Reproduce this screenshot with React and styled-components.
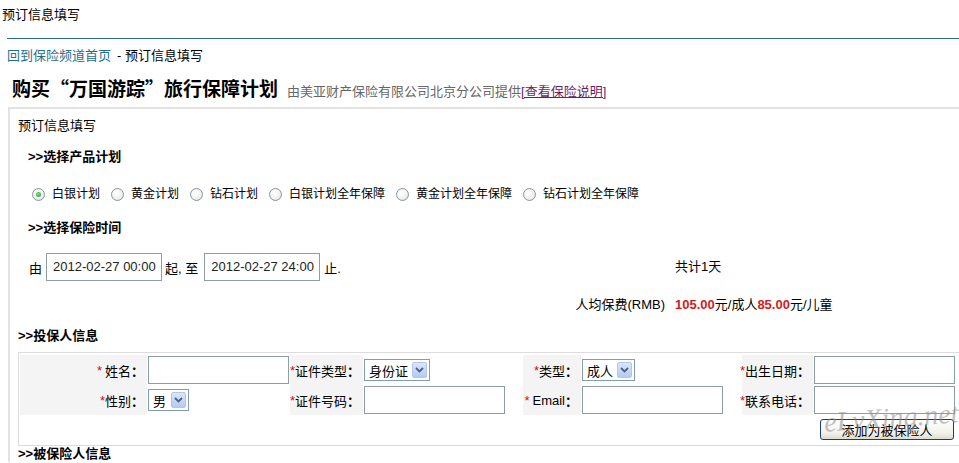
import styled, { createGlobalStyle } from 'styled-components'

const GlobalStyle = createGlobalStyle`
  html, body {
    margin: 0;
    padding: 0;
    background: #fff;
    overflow: hidden;
  }
  body {
    font-family: "Liberation Sans", Arial, "Noto Sans CJK SC", sans-serif;
    font-size: 13px;
    color: #000;
  }
`

const Page = styled.div`
  position: relative;
  width: 985px;
  height: 463px;
  overflow: hidden;
`

const TopTitle = styled.div`
  padding: 6px 2px 0;
  line-height: 18px;
`

const Rule = styled.div`
  margin: 14px 0 0 7px;
  height: 1px;
  background: #2d7090;
`

const Breadcrumb = styled.div`
  margin-top: 8px;
  padding-left: 7px;
  line-height: 18px;
`

const CrumbLink = styled.a`
  color: #1f6f8b;
  text-decoration: none;
  margin-right: 6px;
`

const TitleRow = styled.div`
  margin-top: 11px;
  padding-left: 12px;
  height: 24px;
  line-height: 24px;
  display: flex;
  align-items: baseline;
  overflow: visible;
`

const Title = styled.h1`
  margin: 0 9px 0 0;
  font-family: "Noto Sans CJK SC", sans-serif;
  font-size: 19px;
  line-height: 24px;
  font-weight: 700;
`

const Provider = styled.span`
  color: #666;
  font-size: 13px;
`

const InfoLink = styled.a`
  color: #6b1f6b;
  text-decoration: underline;
`

const Box = styled.div`
  margin: 7px 0 0 8px;
  border-top: 2px solid #e2e2e2;
  border-left: 2px solid #e2e2e2;
  padding: 8px 0 0 8px;
`

const BoxCaption = styled.div`
  line-height: 18px;
`

const SectionHead = styled.div`
  margin: ${({ $top }) => $top}px 0 0 ${({ $indent }) => $indent}px;
  line-height: ${({ $lh }) => $lh || 18}px;
  font-weight: 700;
`

const RadioRow = styled.div`
  margin: 19px 0 0 14px;
  display: flex;
  align-items: center;
  gap: 11px;
  line-height: 18px;
`

const RadioItem = styled.label`
  display: flex;
  align-items: center;
  font-size: 12px;
`

const RadioDot = styled.span`
  width: 11px;
  height: 11px;
  margin-right: 7px;
  border-radius: 50%;
  border: 1px solid #8a96a3;
  background: radial-gradient(circle at 40% 40%, #ffffff 0%, #f0f0ec 55%, #d6d8d3 100%);
  display: flex;
  align-items: center;
  justify-content: center;

  &::after {
    content: '';
    width: 5px;
    height: 5px;
    border-radius: 50%;
    background: radial-gradient(circle at 40% 40%, #7ee07e, #1f9a2a);
    display: ${({ $checked }) => ($checked ? 'block' : 'none')};
  }
`

const DateGrid = styled.div`
  margin: 16px 0 0 10px;
  display: grid;
  grid-template-columns: 637px 1fr;
  column-gap: 10px;
  row-gap: 15px;
  align-items: center;
`

const DateLine = styled.div`
  display: flex;
  align-items: center;
  height: 28px;
`

const Gap = styled.span`
  margin: 0 ${({ $r }) => $r}px 0 ${({ $l }) => $l}px;
`

const DateInput = styled.div`
  box-sizing: border-box;
  width: 116px;
  height: 28px;
  border: 1px solid #8d9cab;
  padding: 5px 0 0 6px;
  font-size: 13px;
  line-height: 16px;
  color: #222;
`

const PriceLabel = styled.div`
  text-align: right;
  line-height: 18px;
`

const PriceValue = styled.div`
  line-height: 18px;
`

const Money = styled.b`
  color: #d41a1a;
`

const FormTable = styled.div`
  margin: 7px 0 0 0;
  border: 1px solid #dcdcdc;
  padding: 2px 0 0 1px;
  display: grid;
  grid-template-columns: 127px 143px 73px 160px 58px 161px 71px 144px;
  grid-auto-rows: 30px;
`

const LabelCell = styled.div`
  background: #f4f4f4;
  display: flex;
  align-items: center;
  justify-content: flex-end;
  padding-right: 3px;
  white-space: nowrap;
`

const Star = styled.span`
  color: #cc1111;
  margin-right: ${({ $space }) => ($space ? 3 : 0)}px;
`

const Colon = styled.b`
  font-weight: 700;
`

const ValueCell = styled.div`
  display: flex;
  align-items: center;
  padding-left: 1px;
`

const TextBox = styled.div`
  box-sizing: border-box;
  width: 141px;
  height: 28px;
  border: 1px solid #8d9cab;
  background: #fff;
`

const Select = styled.div`
  box-sizing: border-box;
  width: ${({ $w }) => $w}px;
  height: 22px;
  border: 1px solid #7f9db9;
  display: flex;
  align-items: center;
  justify-content: space-between;
  padding: 0 2px 0 4px;
  font-size: 13px;
  background: #fff;
`

const SelectArrow = styled.span`
  width: 15px;
  height: 16px;
  border-radius: 2px;
  background: linear-gradient(#dbe6fb, #b6c9f2);
  border: 1px solid #b4c6ec;
  box-sizing: border-box;
  display: flex;
  align-items: center;
  justify-content: center;
`

const ActionCell = styled.div`
  grid-column: 1 / -1;
  display: flex;
  align-items: center;
  justify-content: flex-end;
  padding-right: 3px;
  height: 28px;
`

const AddButton = styled.button`
  width: 134px;
  height: 21px;
  border: 1px solid #1c3f63;
  border-radius: 3px;
  background: linear-gradient(#ffffff, #f2f1ea 70%, #dedbd0);
  font-family: "Liberation Sans", Arial, "Noto Sans CJK SC", sans-serif;
  font-size: 13px;
  color: #000;
  padding: 0;
`

const Watermark = styled.div`
  position: absolute;
  left: 824px;
  top: 402px;
  font-family: "Liberation Serif", serif;
  font-style: italic;
  font-size: 28px;
  color: rgba(140, 140, 140, 0.55);
  transform: rotate(-4deg);
  pointer-events: none;
  white-space: nowrap;
`

const plans = ['白银计划', '黄金计划', '钻石计划', '白银计划全年保障', '黄金计划全年保障', '钻石计划全年保障']

const Chevron = () => (
  <svg width="9" height="6" viewBox="0 0 9 6">
    <path d="M1 1 L4.5 4.5 L8 1" fill="none" stroke="#4d6185" strokeWidth="1.8" />
  </svg>
)

const Label = ({ text, space }) => (
  <LabelCell>
    <Star $space={space}>*</Star>
    {text}
    <Colon>：</Colon>
  </LabelCell>
)

const Dropdown = ({ value, width }) => (
  <Select $w={width}>
    <span>{value}</span>
    <SelectArrow>
      <Chevron />
    </SelectArrow>
  </Select>
)

const App = () => {
  return (
    <Page>
      <GlobalStyle />
      <TopTitle>预订信息填写</TopTitle>
      <Rule />
      <Breadcrumb>
        <CrumbLink href="#">回到保险频道首页</CrumbLink>- 预订信息填写
      </Breadcrumb>
      <TitleRow>
        <Title>购买“万国游踪”旅行保障计划</Title>
        <Provider>由美亚财产保险有限公司北京分公司提供</Provider>
        <InfoLink href="#">[查看保险说明]</InfoLink>
      </TitleRow>
      <Box>
        <BoxCaption>预订信息填写</BoxCaption>
        <SectionHead $top={13} $indent={10}>
          &gt;&gt;选择产品计划
        </SectionHead>
        <RadioRow>
          {plans.map((plan, i) => (
            <RadioItem key={plan}>
              <RadioDot $checked={i === 0} />
              {plan}
            </RadioItem>
          ))}
        </RadioRow>
        <SectionHead $top={16} $indent={10}>
          &gt;&gt;选择保险时间
        </SectionHead>
        <DateGrid>
          <DateLine>
            <Gap $l={1} $r={4}>由</Gap>
            <DateInput>2012-02-27 00:00</DateInput>
            <Gap $l={3} $r={6}>起, 至</Gap>
            <DateInput>2012-02-27 24:00</DateInput>
            <Gap $l={4} $r={0}>止.</Gap>
          </DateLine>
          <PriceValue>共计1天</PriceValue>
          <PriceLabel>人均保费(RMB)</PriceLabel>
          <PriceValue>
            <Money>105.00</Money>元/成人<Money>85.00</Money>元/儿童
          </PriceValue>
        </DateGrid>
        <SectionHead $top={13} $indent={0}>
          &gt;&gt;投保人信息
        </SectionHead>
        <FormTable>
          <Label text="姓名" space />
          <ValueCell>
            <TextBox />
          </ValueCell>
          <Label text="证件类型" />
          <ValueCell>
            <Dropdown value="身份证" width={66} />
          </ValueCell>
          <Label text="类型" />
          <ValueCell>
            <Dropdown value="成人" width={53} />
          </ValueCell>
          <Label text="出生日期" />
          <ValueCell>
            <TextBox />
          </ValueCell>

          <Label text="性别" />
          <ValueCell>
            <Dropdown value="男" width={41} />
          </ValueCell>
          <Label text="证件号码" />
          <ValueCell>
            <TextBox />
          </ValueCell>
          <Label text="Email" space />
          <ValueCell>
            <TextBox />
          </ValueCell>
          <Label text="联系电话" />
          <ValueCell>
            <TextBox />
          </ValueCell>

          <ActionCell>
            <AddButton>添加为被保险人</AddButton>
          </ActionCell>
        </FormTable>
        <SectionHead $top={0} $indent={0} $lh={16}>
          &gt;&gt;被保险人信息
        </SectionHead>
      </Box>
      <Watermark>eLvXing.net</Watermark>
    </Page>
  )
}

export default App
